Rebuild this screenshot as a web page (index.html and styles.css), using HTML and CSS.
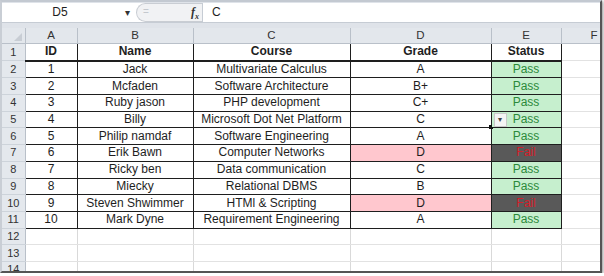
FILE: index.html
```html
<!DOCTYPE html>
<html lang="en">
<head>
<meta charset="UTF-8">
<title>Grades sheet</title>
<link rel="stylesheet" href="styles.css">
</head>
<body>

<div class="window">
    <!-- formula bar -->
    <div class="fbar">
        <div class="namebox">D5</div>
        <div class="nb-drop">&#9662;</div>
        <div class="fx-zone">
            <span class="grip">=</span>
            <span class="fx">f<sub>x</sub></span>
        </div>
        <div class="finput">C</div>
    </div>

    <table class="sheet">
        <colgroup>
            <col class="c-rh">
            <col class="c-a">
            <col class="c-b">
            <col class="c-c">
            <col class="c-d">
            <col class="c-e">
            <col class="c-f">
        </colgroup>
        <tr class="colhead">
            <th class="corner"><span class="tri"></span></th>
            <th>A</th><th>B</th><th>C</th><th>D</th><th>E</th><th class="clip">F</th>
        </tr>
        <tr class="hdr">
            <th class="rh">1</th>
            <td class="b">ID</td><td class="b">Name</td><td class="b">Course</td><td class="b">Grade</td><td class="b">Status</td><td class="free"></td>
        </tr>
        <tr>
            <th class="rh">2</th>
            <td class="b">1</td><td class="b">Jack</td><td class="b">Multivariate Calculus</td><td class="b">A</td><td class="b pass">Pass</td><td class="free"></td>
        </tr>
        <tr>
            <th class="rh">3</th>
            <td class="b">2</td><td class="b">Mcfaden</td><td class="b">Software Architecture</td><td class="b">B+</td><td class="b pass">Pass</td><td class="free"></td>
        </tr>
        <tr>
            <th class="rh">4</th>
            <td class="b">3</td><td class="b">Ruby jason</td><td class="b">PHP development</td><td class="b">C+</td><td class="b pass">Pass</td><td class="free"></td>
        </tr>
        <tr>
            <th class="rh">5</th>
            <td class="b">4</td><td class="b">Billy</td><td class="b">Microsoft Dot Net Platform</td><td class="b sel">C<span class="handle"></span></td><td class="b pass sel">Pass<span class="dd">&#9662;</span></td><td class="free"></td>
        </tr>
        <tr>
            <th class="rh">6</th>
            <td class="b">5</td><td class="b">Philip namdaf</td><td class="b">Software Engineering</td><td class="b">A</td><td class="b pass">Pass</td><td class="free"></td>
        </tr>
        <tr>
            <th class="rh">7</th>
            <td class="b">6</td><td class="b">Erik Bawn</td><td class="b">Computer Networks</td><td class="b bad">D</td><td class="b fail">Fail</td><td class="free"></td>
        </tr>
        <tr>
            <th class="rh">8</th>
            <td class="b">7</td><td class="b">Ricky ben</td><td class="b">Data communication</td><td class="b">C</td><td class="b pass">Pass</td><td class="free"></td>
        </tr>
        <tr>
            <th class="rh">9</th>
            <td class="b">8</td><td class="b">Miecky</td><td class="b">Relational DBMS</td><td class="b">B</td><td class="b pass">Pass</td><td class="free"></td>
        </tr>
        <tr>
            <th class="rh">10</th>
            <td class="b">9</td><td class="b">Steven Shwimmer</td><td class="b">HTMl &amp; Scripting</td><td class="b bad">D</td><td class="b fail">Fail</td><td class="free"></td>
        </tr>
        <tr>
            <th class="rh">11</th>
            <td class="b">10</td><td class="b">Mark Dyne</td><td class="b">Requirement Engineering</td><td class="b">A</td><td class="b pass">Pass</td><td class="free"></td>
        </tr>
        <tr>
            <th class="rh">12</th>
            <td class="free"></td><td class="free"></td><td class="free"></td><td class="free"></td><td class="free"></td><td class="free"></td>
        </tr>
        <tr>
            <th class="rh">13</th>
            <td class="free"></td><td class="free"></td><td class="free"></td><td class="free"></td><td class="free"></td><td class="free"></td>
        </tr>
        <tr>
            <th class="rh">14</th>
            <td class="free"></td><td class="free"></td><td class="free"></td><td class="free"></td><td class="free"></td><td class="free"></td>
        </tr>
    </table>
</div>

</body>
</html>
```

FILE: styles.css
```css
html, body {
    margin: 0;
    padding: 0;
    background: #ffffff;
}
body {
    font-family: 'Liberation Sans', Arial, sans-serif;
    color: #1e1e1e;
}
.window {
    width: 602px;
    height: 273px;
    overflow: hidden;
    background: #dfe3e9;
    border-top: 2px solid #c3c9d1;
    border-left: 2px solid #c9ced5;
    border-right: 2px solid #555555;
    border-bottom: 2px solid #555555;
    box-shadow: 1px 1px 3px rgba(0,0,0,0.45);
    box-sizing: border-box;
}

/* formula bar */
.fbar {
    display: flex;
    height: 19px;
    margin-top: 1px;
    background: #ffffff;
    border-bottom: 1px solid #c6ccd4;
    font-size: 12px;
    line-height: 19px;
}
.namebox {
    width: 116px;
    text-align: center;
}
.nb-drop {
    width: 18px;
    font-size: 10px;
    color: #333;
    text-align: center;
}
.fx-zone {
    width: 66px;
    display: flex;
    justify-content: space-between;
    background: #f1f2f4;
    border: 1px solid #c9cdd3;
    border-right: none;
    border-radius: 10px 0 0 10px;
    box-sizing: border-box;
    height: 19px;
    padding: 0 3px 0 6px;
}
.grip {
    color: #c4c8ce;
    font-size: 10px;
    line-height: 16px;
}
.fx {
    font-family: 'Liberation Serif', serif;
    font-style: italic;
    font-weight: bold;
    font-size: 12px;
    color: #333;
    line-height: 17px;
}
.fx sub {
    font-size: 8px;
}
.finput {
    flex: 1;
    border-left: 1px solid #c6ccd4;
    padding-left: 9px;
}

/* the grid */
.sheet {
    margin-top: 5px;
    border-collapse: collapse;
    table-layout: fixed;
    width: 620px;
    background: #ffffff;
    font-size: 12px;
}
.c-rh { width: 23px; }
.c-a { width: 52px; }
.c-b { width: 116px; }
.c-c { width: 157px; }
.c-d { width: 141px; }
.c-e { width: 70px; }
.c-f { width: 61px; }

.sheet th, .sheet td {
    height: 15.7px;
    padding: 0;
    text-align: center;
    white-space: nowrap;
    overflow: hidden;
    line-height: 15px;
}
.colhead th {
    height: 15px;
    background: #e3e7ec;
    border-right: 1px solid #b9c0c9;
    border-bottom: 1px solid #b9c0c9;
    font-weight: normal;
    color: #333;
    font-size: 11.5px;
}
.colhead .clip {
    text-align: right;
    padding-right: 24px;
}
.corner {
    position: relative;
}
.tri {
    position: absolute;
    right: 3px;
    bottom: 2px;
    width: 0;
    height: 0;
    border-left: 8px solid transparent;
    border-bottom: 8px solid #c8cdd4;
}
.rh {
    background: #e4e8ed;
    border-right: 1px solid #b9c0c9;
    border-bottom: 1px solid #cdd3da;
    font-weight: normal;
    color: #333;
    font-size: 11px;
}
.sheet td.b {
    border: 1px solid #1e1e1e;
}
.hdr td.b {
    font-weight: bold;
    border-bottom: 2px solid #1e1e1e;
}
.sheet td.free {
    border-right: 1px solid #d9d9d9;
    border-bottom: 1px solid #e2e2e2;
}
.pass {
    background: #c6efce;
    color: #2b8a3a;
}
.fail {
    background: #595959;
    color: #d21f2a;
}
.bad {
    background: #ffc7ce;
}
.sel {
    position: relative;
    overflow: visible !important;
}
.handle {
    position: absolute;
    right: -2px;
    bottom: -2px;
    width: 4px;
    height: 4px;
    background: #111;
}
.dd {
    position: absolute;
    left: 2px;
    top: 1px;
    width: 11px;
    height: 12px;
    background: #f4f4f4;
    border: 1px solid #c9c9c9;
    font-size: 8px;
    line-height: 12px;
    color: #444;
}
```
